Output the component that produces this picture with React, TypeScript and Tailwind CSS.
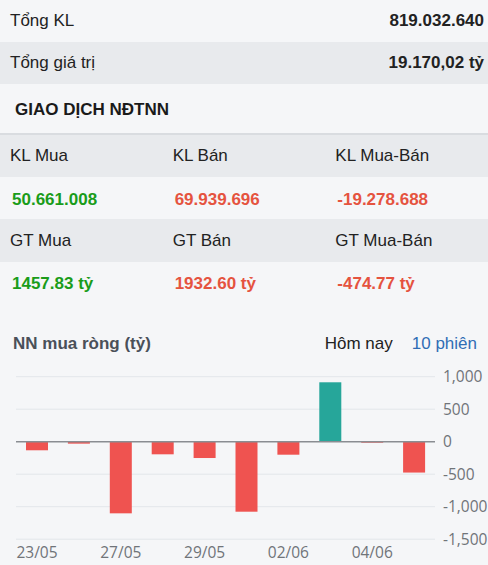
import React from "react";

const bars = [-132, -30, -1102, -194, -251, -1077, -200, 914, -5, -474.77];
const xLabels: [number, string][] = [
  [0, "23/05"],
  [2, "27/05"],
  [4, "29/05"],
  [6, "02/06"],
  [8, "04/06"],
];
const yTicks = [1000, 500, 0, -500, -1000, -1500];

function Chart() {
  const zeroY = 77.7;
  const k = 32.5 / 500;
  const step = 41.9;
  const x0 = 26;
  const bw = 22;
  return (
    <svg width="488" height="200" viewBox="0 0 488 200" className="block">
      {yTicks.map((t) => {
        const y = zeroY - t * k;
        return (
          <g key={t}>
            {t !== 0 && (
              <line x1="16" x2="435" y1={y} y2={y} stroke="#e3e6ea" strokeWidth="1" />
            )}
            <text
              x="443"
              y={y + 5.5}
              fontSize="15.5"
              fill="#707479"
              fontFamily="'Open Sans', sans-serif"
            >
              {t === 0 ? "0" : t.toLocaleString("en-US")}
            </text>
          </g>
        );
      })}
      {bars.map((v, i) => {
        const x = x0 + i * step;
        const h = Math.max(Math.abs(v) * k, 1);
        const y = v >= 0 ? zeroY - h : zeroY;
        return (
          <rect key={i} x={x} y={y} width={bw} height={h} fill={v >= 0 ? "#26a69a" : "#ef5350"} />
        );
      })}
      <line x1="16" x2="435" y1={zeroY} y2={zeroY} stroke="#8a8d92" strokeWidth="1.5" />
      {xLabels.map(([i, l]) => (
        <text
          key={l}
          x={x0 + i * step + bw / 2}
          y="194"
          textAnchor="middle"
          fontSize="15.5"
          fill="#707479"
          fontFamily="'Open Sans', sans-serif"
        >
          {l}
        </text>
      ))}
    </svg>
  );
}

export default function App() {
  const grid = "grid grid-cols-3";
  return (
    <div
      className="w-[488px] h-[565px] overflow-hidden bg-[#f5f6f8] text-[17px] text-[#222]"
      style={{ fontFamily: "'Liberation Sans', Arial, sans-serif" }}
    >
      <div className="flex h-[42px] items-center justify-between pl-[10px] pr-[4px]">
        <span>Tổng KL</span>
        <span className="font-bold">819.032.640</span>
      </div>
      <div className="flex h-[42px] items-center justify-between bg-[#e8eaed] pl-[10px] pr-[4px]">
        <span>Tổng giá trị</span>
        <span className="font-bold">19.170,02 tỷ</span>
      </div>
      <div className="flex h-[51px] items-center border-b-2 border-[#d9dce0] pl-[15px] pt-[3px] font-bold text-[#1a1a1a]">
        GIAO DỊCH NĐTNN
      </div>
      <div className={`${grid} h-[42px] items-center bg-[#e8eaed]`}>
        <span className="pl-[10px]">KL Mua</span>
        <span className="pl-[10px]">KL Bán</span>
        <span className="pl-[10px]">KL Mua-Bán</span>
      </div>
      <div className={`${grid} h-[42px] items-center pt-[3px] font-bold`}>
        <span className="pl-[12px] text-[#1a9c1a]">50.661.008</span>
        <span className="pl-[12px] text-[#e5533f]">69.939.696</span>
        <span className="pl-[12px] text-[#e5533f]">-19.278.688</span>
      </div>
      <div className={`${grid} h-[43px] items-center bg-[#e8eaed]`}>
        <span className="pl-[10px]">GT Mua</span>
        <span className="pl-[10px]">GT Bán</span>
        <span className="pl-[10px]">GT Mua-Bán</span>
      </div>
      <div className={`${grid} h-[42px] items-center pt-[2px] font-bold`}>
        <span className="pl-[12px] text-[#1a9c1a]">1457.83 tỷ</span>
        <span className="pl-[12px] text-[#e5533f]">1932.60 tỷ</span>
        <span className="pl-[12px] text-[#e5533f]">-474.77 tỷ</span>
      </div>
      <div className="flex h-[60px] items-center justify-between pl-[13px] pr-[11px] pt-[22px] pb-[3px]">
        <span className="font-bold text-[#4a5059]">NN mua ròng (tỷ)</span>
        <div className="flex gap-[19px]">
          <span className="text-[#222]">Hôm nay</span>
          <span className="text-[#2f6db5]">10 phiên</span>
        </div>
      </div>
      <Chart />
    </div>
  );
}
